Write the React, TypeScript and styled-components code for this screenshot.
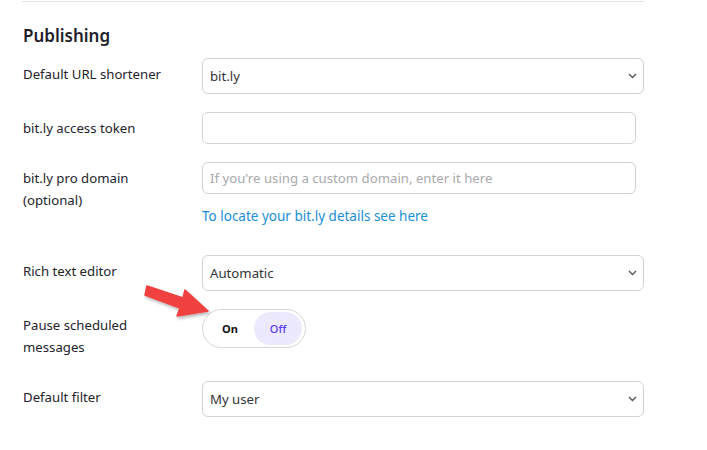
import React from "react";
import styled, { createGlobalStyle } from "styled-components";

const Global = createGlobalStyle`
  html, body { margin: 0; padding: 0; background: #ffffff; }
  body { font-family: "Noto Sans", "Open Sans", sans-serif; color: #23232b; }
  * { box-sizing: border-box; }
`;

const Page = styled.div`
  position: relative;
  width: 707px;
  height: 450px;
  padding: 1px 63px 0 22px;
  overflow: hidden;
`;

const Divider = styled.div`
  height: 1px;
  background: #e2e2e2;
`;

const Title = styled.h2`
  margin: 22px 0 10px 1px;
  font-size: 17px;
  line-height: 24px;
  font-weight: 600;
  color: #1f1f2b;
`;

const Row = styled.div<{ $mb?: number }>`
  display: grid;
  grid-template-columns: 180px 1fr;
  margin-bottom: ${(p) => p.$mb ?? 18}px;
`;

const Label = styled.label`
  padding: 5px 0 0 1px;
  font-size: 13.2px;
  line-height: 22px;
  color: #23232b;
`;

const Control = styled.div<{ $inset?: number }>`
  display: flex;
  flex-direction: column;
  align-items: flex-start;
  padding-right: ${(p) => p.$inset ?? 0}px;
`;

const SelectBox = styled.div`
  position: relative;
  width: 100%;
  height: 36px;
  border: 1px solid #d3d3d3;
  border-radius: 6px;
  padding: 0 30px 0 7px;
  display: flex;
  align-items: center;
  font-size: 13.2px;
  color: #333338;
  background: #fff;
`;

const Chevron = styled.svg`
  position: absolute;
  right: 6px;
  top: 50%;
  margin-top: -3px;
`;

const TextInput = styled.div<{ $placeholder?: boolean }>`
  width: 100%;
  height: 32px;
  border: 1px solid #d3d3d3;
  border-radius: 6px;
  padding: 0 7px;
  display: flex;
  align-items: center;
  font-size: 13.2px;
  color: ${(p) => (p.$placeholder ? "#a9a9ad" : "#333338")};
`;

const HelpLink = styled.a`
  margin-top: 11px;
  margin-bottom: 28px;
  font-size: 13.5px;
  line-height: 22px;
  color: #1a8ed6;
  text-decoration: none;
`;

const Toggle = styled.div`
  display: flex;
  align-items: center;
  height: 39px;
  padding: 0 3px;
  border: 1px solid #d6d6d9;
  border-radius: 20px;
  background: #fff;
`;

const ToggleOption = styled.span<{ $active?: boolean }>`
  width: 48px;
  height: 33px;
  border-radius: 17px;
  display: flex;
  align-items: center;
  justify-content: center;
  font-size: 11px;
  font-weight: ${(p) => (p.$active ? 500 : 700)};
  color: ${(p) => (p.$active ? "#5a3cf0" : "#111")};
  background: ${(p) => (p.$active ? "#ece9fd" : "transparent")};
`;

const Arrow = styled.svg`
  position: absolute;
  left: 138px;
  top: 280px;
  overflow: visible;
`;

const ChevronIcon = () => (
  <Chevron width="9" height="6" viewBox="0 0 9 6">
    <path d="M1 1 L4.5 4.5 L8 1" fill="none" stroke="#555" strokeWidth="1.4" />
  </Chevron>
);

const Select = ({ value }: { value: string }) => (
  <SelectBox>
    {value}
    <ChevronIcon />
  </SelectBox>
);

export default function App() {
  return (
    <>
      <Global />
      <Page>
        <Divider />
        <Title>Publishing</Title>

        <Row>
          <Label>Default URL shortener</Label>
          <Control>
            <Select value="bit.ly" />
          </Control>
        </Row>

        <Row>
          <Label>bit.ly access token</Label>
          <Control $inset={8}>
            <TextInput />
          </Control>
        </Row>

        <Row $mb={0}>
          <Label>
            bit.ly pro domain
            <br />
            (optional)
          </Label>
          <Control $inset={8}>
            <TextInput $placeholder>If you're using a custom domain, enter it here</TextInput>
            <HelpLink href="#">To locate your bit.ly details see here</HelpLink>
          </Control>
        </Row>

        <Row>
          <Label>Rich text editor</Label>
          <Control>
            <Select value="Automatic" />
          </Control>
        </Row>

        <Row $mb={23}>
          <Label>
            Pause scheduled
            <br />
            messages
          </Label>
          <Control>
            <Toggle>
              <ToggleOption>On</ToggleOption>
              <ToggleOption $active>Off</ToggleOption>
            </Toggle>
          </Control>
        </Row>

        <Row>
          <Label>Default filter</Label>
          <Control>
            <Select value="My user" />
          </Control>
        </Row>

        <Arrow width="80" height="45" viewBox="0 0 80 45">
          <defs>
            <filter id="sh" x="-20%" y="-20%" width="150%" height="160%">
              <feDropShadow dx="1" dy="2" stdDeviation="1.5" floodColor="#000" floodOpacity="0.3" />
            </filter>
          </defs>
          <path
            d="M9 6 L45 18 L47 10 L70 31 L39 36 L42 28 L7 15 Z"
            fill="#f0403f"
            stroke="#f0403f"
            strokeWidth="1.5"
            strokeLinejoin="round"
            filter="url(#sh)"
          />
        </Arrow>
      </Page>
    </>
  );
}
